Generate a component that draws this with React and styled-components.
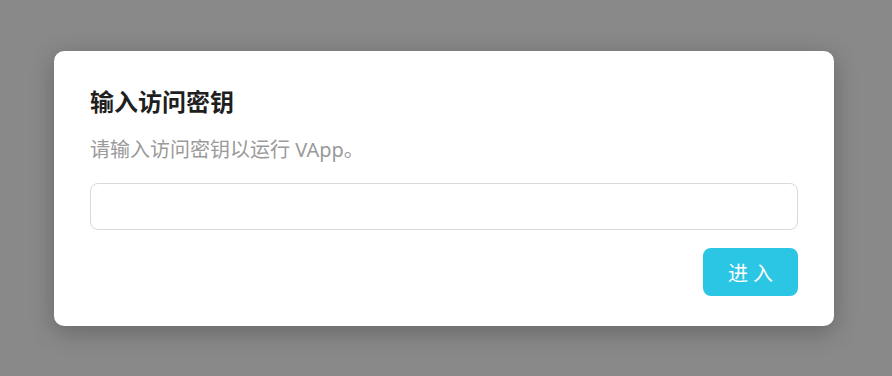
import React, { useState } from 'react';
import styled, { createGlobalStyle } from 'styled-components';

const GlobalStyle = createGlobalStyle`
    html, body {
        margin: 0;
        padding: 0;
        height: 100%;
        background: #898989;
        font-family: "Noto Sans", "Noto Sans CJK SC", sans-serif;
    }
    #root {
        height: 100%;
    }
`;

const Overlay = styled.div`
    box-sizing: border-box;
    width: 100%;
    height: 376px;
    padding: 51px 58px 50px 54px;
    background: #898989;
`;

const Dialog = styled.div`
    box-sizing: border-box;
    width: 780px;
    height: 275px;
    background: #fff;
    border-radius: 10px;
    box-shadow: 0 6px 24px rgba(0, 0, 0, 0.25);
    padding: 35px 36px 30px 36px;
    display: flex;
    flex-direction: column;
`;

const Title = styled.h2`
    margin: 0;
    font-size: 24px;
    line-height: 30px;
    font-weight: 700;
    color: #1f1f1f;
    font-family: "Noto Sans CJK SC", sans-serif;
`;

const Description = styled.p`
    margin: 21px 0 0;
    font-size: 20px;
    line-height: 26px;
    color: #9a9a9a;
    font-family: "Noto Sans", "Noto Sans CJK SC", sans-serif;
`;

const KeyInput = styled.input`
    box-sizing: border-box;
    margin-top: 20px;
    width: 100%;
    height: 47px;
    border: 1px solid #d9d9d9;
    border-radius: 8px;
    padding: 0 14px;
    font-size: 16px;
    outline: none;
    &:focus {
        border-color: #2bc6e3;
    }
`;

const Actions = styled.div`
    display: flex;
    justify-content: flex-end;
    margin-top: 18px;
`;

const EnterButton = styled.button`
    width: 95px;
    height: 48px;
    border: none;
    border-radius: 8px;
    background: #2bc6e3;
    color: #fff;
    font-size: 20px;
    letter-spacing: 5px;
    padding: 0 0 0 5px;
    font-family: "Noto Sans CJK SC", sans-serif;
    font-weight: 400;
    cursor: pointer;
`;

const App = () => {
    const [key, setKey] = useState('');

    return (
        <>
            <GlobalStyle />
            <Overlay>
                <Dialog>
                    <Title>输入访问密钥</Title>
                    <Description>请输入访问密钥以运行 VApp。</Description>
                    <KeyInput type="password" value={key} onChange={(e) => setKey(e.target.value)} />
                    <Actions>
                        <EnterButton>进入</EnterButton>
                    </Actions>
                </Dialog>
            </Overlay>
        </>
    );
};

export default App;
